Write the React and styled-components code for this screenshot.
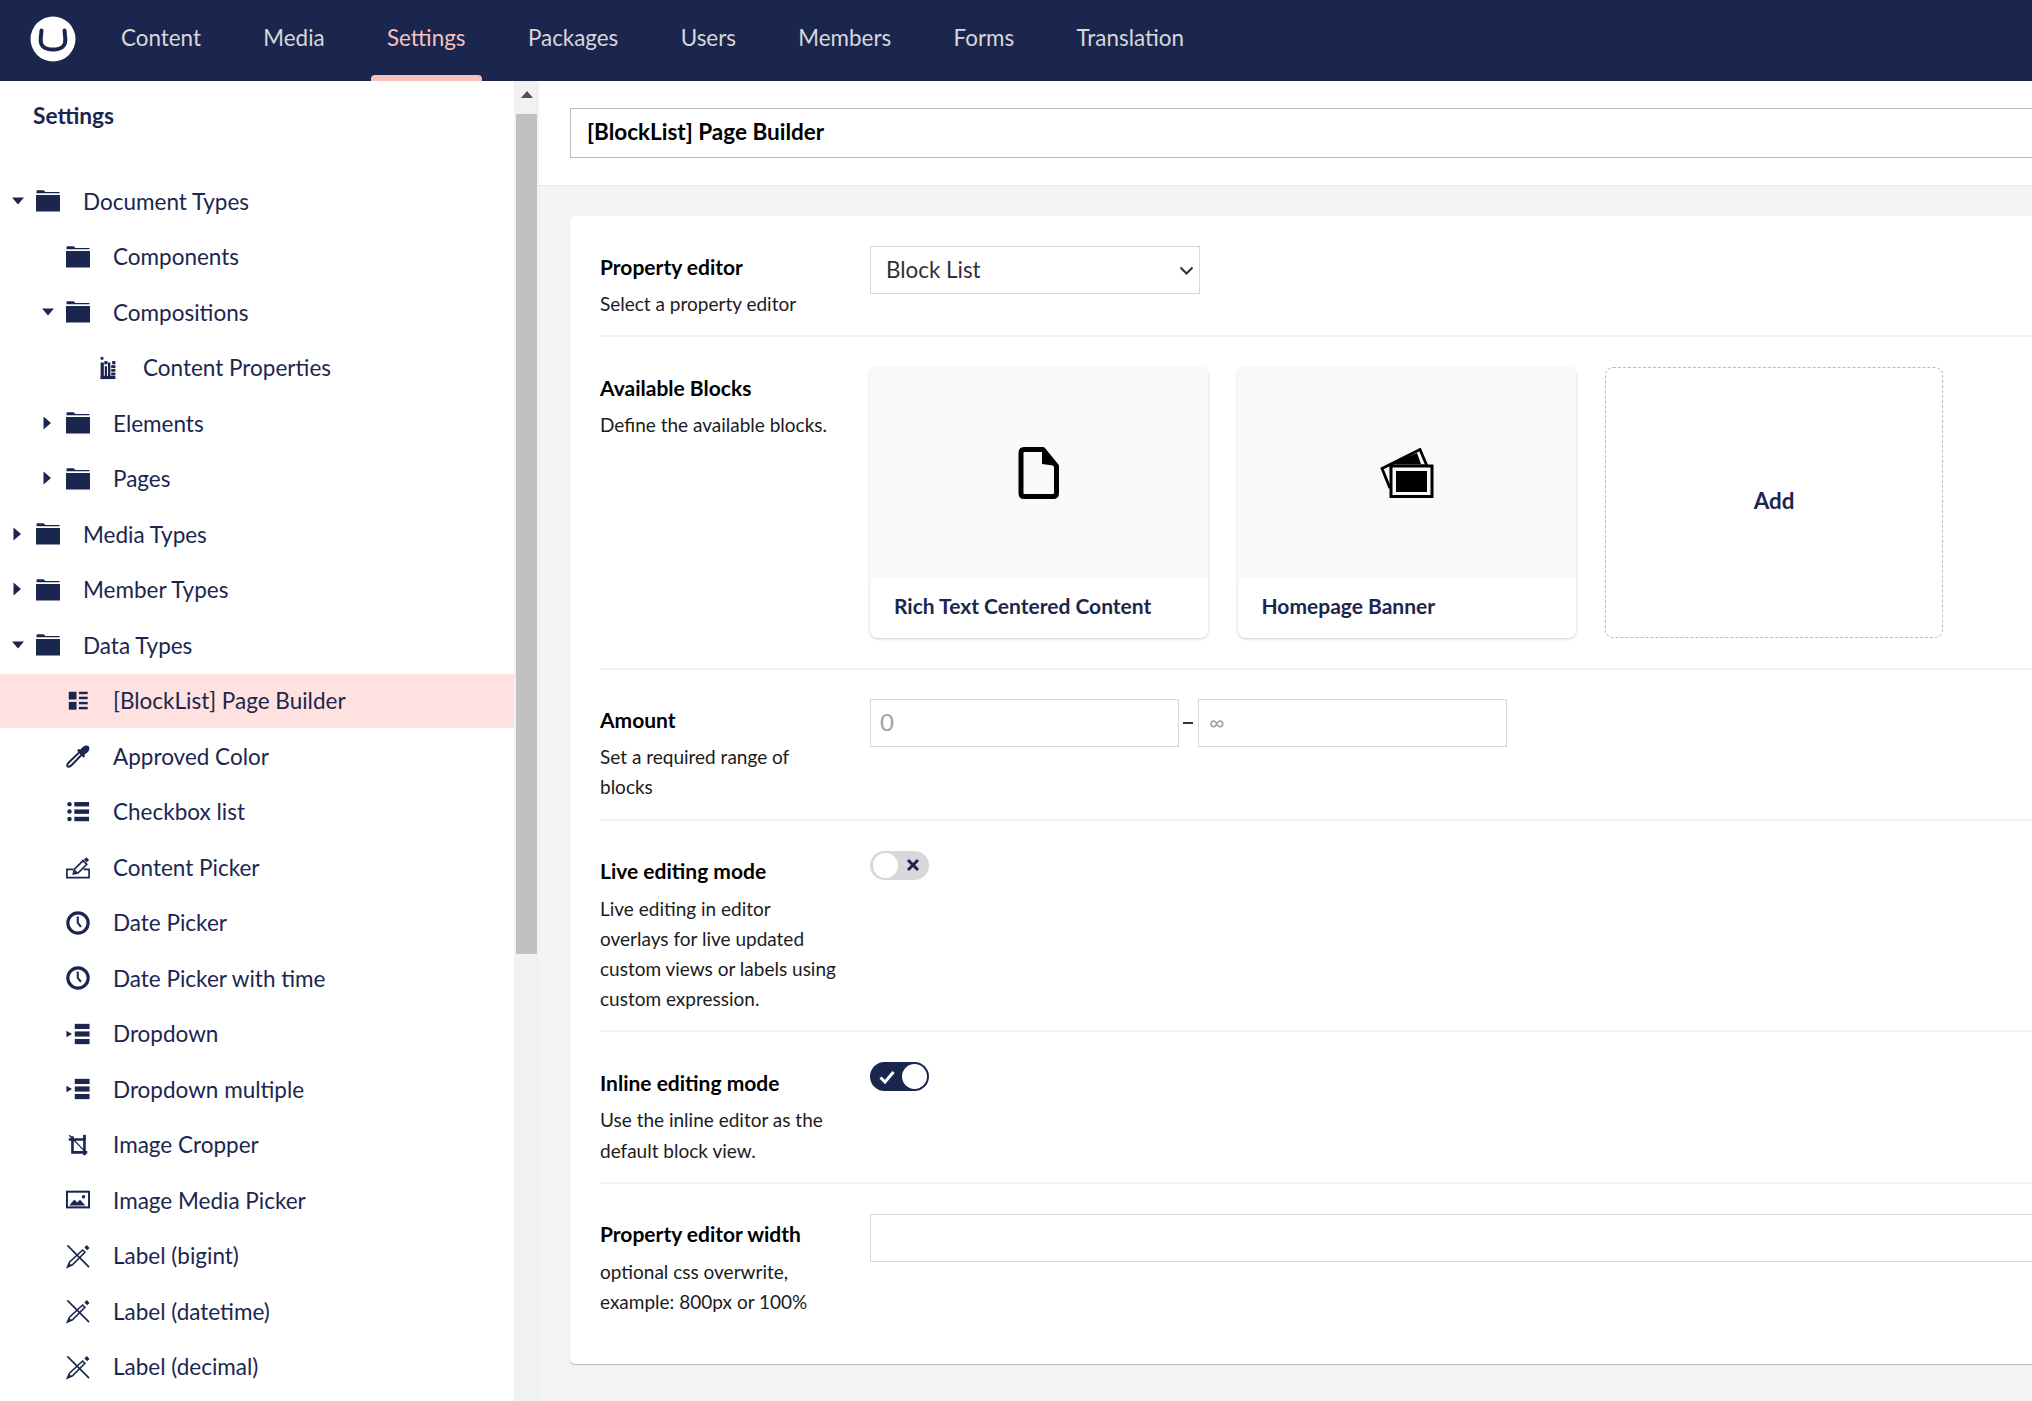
import React from 'react';
import styled, { createGlobalStyle } from 'styled-components';

const NAVY = '#1b264f';

const GlobalStyle = createGlobalStyle`
  html, body {
    margin: 0;
    height: 100%;
    overflow: hidden;
    background: #fff;
  }
  * {
    box-sizing: border-box;
  }
  body {
    font-family: Lato, "Open Sans", sans-serif;
    text-rendering: optimizeLegibility;
    font-feature-settings: "liga" 1;
    color: #000;
  }
`;

const Folder = () => (
  <svg width="24" height="22" viewBox="0 0 24 22" fill={NAVY}>
    <path d="M0.5 2.6V1.2Q0.5 0.2 1.5 0.2H7.5L9.5 2H23.5V3.2H0.5z" />
    <rect x="0" y="5" width="24" height="16.5" />
  </svg>
);

const Glyph = ({ children }) => (
  <svg width="26" height="26" viewBox="0 0 26 26" fill={NAVY}>
    {children}
  </svg>
);

const ICONS = {
  folder: <Folder />,
  properties: (
    <Glyph>
      <rect x="5" y="1" width="3" height="3" />
      <rect x="9" y="5.5" width="3.5" height="3.5" />
      <rect x="17.5" y="5.5" width="3.5" height="3.5" />
      <rect x="5" y="7" width="3.5" height="18" />
      <rect x="5" y="21.5" width="16" height="3.5" />
      <rect x="9.5" y="11" width="2.4" height="11" />
      <rect x="13" y="7" width="2.6" height="15" />
      <rect x="16.5" y="10" width="4.5" height="3" />
      <rect x="16.5" y="14" width="4.5" height="3" />
      <rect x="16.5" y="18" width="4.5" height="3" />
    </Glyph>
  ),
  blocks: (
    <Glyph>
      <rect x="3" y="3" width="8.4" height="8.4" />
      <rect x="3" y="14" width="8.4" height="8.4" />
      <rect x="14" y="3" width="9.5" height="2.6" />
      <rect x="14" y="8.4" width="9.5" height="2.6" />
      <rect x="14" y="14" width="9.5" height="2.6" />
      <rect x="14" y="19.4" width="9.5" height="2.6" />
    </Glyph>
  ),
  dropper: (
    <Glyph>
      <path d="M15 8.5L17.5 11L6.5 22.5C4.5 24.5 2.5 25 1.8 24.2C1 23.4 1.5 21.5 3.5 19.5z" fill="none" stroke={NAVY} strokeWidth="2.2" />
      <path d="M12 7l1.5-1.5 2 0.5 2.5-2.5c2-2 5-2.5 6.5-1s1 4.5-1 6.5L20 11.5l0.5 2L19 15z" />
    </Glyph>
  ),
  list: (
    <Glyph>
      <circle cx="3.8" cy="4.5" r="2.4" />
      <circle cx="3.8" cy="12.5" r="2.4" />
      <circle cx="3.8" cy="20.5" r="2.4" />
      <rect x="9" y="2.2" width="16" height="4.8" />
      <rect x="9" y="10.2" width="16" height="4.8" />
      <rect x="9" y="18.2" width="16" height="4.8" />
    </Glyph>
  ),
  picker: (
    <Glyph>
      <path d="M8 15.5H1V24.5H25V15.5H19" fill="none" stroke={NAVY} strokeWidth="1.8" />
      <path d="M8 20.5l1-5L18.5 6l4 4L13 19.5z" fill="none" stroke={NAVY} strokeWidth="1.8" />
      <path d="M9 20l0.8-4 3.2 3.2z" />
      <path d="M22 2.5l3 3-2.5 2.4-3-3z" />
    </Glyph>
  ),
  clock: (
    <Glyph>
      <circle cx="13" cy="13" r="11" fill="none" stroke={NAVY} strokeWidth="3.4" />
      <path d="M11.6 6h2.2v6.5l3.3 4-1.8 1.4-3.7-4.8z" />
    </Glyph>
  ),
  dropdown: (
    <Glyph>
      <path d="M0.5 9.5l6 3.5-6 3.5z" />
      <rect x="9.5" y="2" width="16" height="5.6" />
      <rect x="9.5" y="10.2" width="16" height="5.6" />
      <rect x="9.5" y="18.4" width="16" height="5.6" />
    </Glyph>
  ),
  crop: (
    <Glyph>
      <path d="M7 3.5V21H23M3 7H20V24" fill="none" stroke={NAVY} strokeWidth="2.8" />
      <path d="M3.5 2.5L21.5 21" fill="none" stroke={NAVY} strokeWidth="1.4" />
      <rect x="18.5" y="2" width="3" height="5" />
    </Glyph>
  ),
  image: (
    <Glyph>
      <rect x="1" y="4" width="24" height="17" fill="none" stroke={NAVY} strokeWidth="2.2" />
      <path d="M3.5 19l5.5-6.5 3.2 3.2 3-3 5.8 6.3z" />
      <circle cx="19" cy="9.4" r="1.9" />
    </Glyph>
  ),
  label: (
    <Glyph>
      <path d="M1.5 1.5L25 25" fill="none" stroke={NAVY} strokeWidth="1.8" />
      <path d="M18 6.5l2.5 2.5L7 22.5 1.5 25l2.5-5.5z" fill="none" stroke={NAVY} strokeWidth="1.7" />
      <path d="M1.5 25l1.8-4.6 2.8 2.8z" />
      <path d="M22.5 1.2l3 3-2.6 2.6-3-3z" />
    </Glyph>
  ),
};

const NAV_ITEMS = ['Content', 'Media', 'Settings', 'Packages', 'Users', 'Members', 'Forms', 'Translation'];

const TREE = [
  { name: 'Document Types', level: 0, icon: 'folder', arrow: 'down' },
  { name: 'Components', level: 1, icon: 'folder' },
  { name: 'Compositions', level: 1, icon: 'folder', arrow: 'down' },
  { name: 'Content Properties', level: 2, icon: 'properties' },
  { name: 'Elements', level: 1, icon: 'folder', arrow: 'right' },
  { name: 'Pages', level: 1, icon: 'folder', arrow: 'right' },
  { name: 'Media Types', level: 0, icon: 'folder', arrow: 'right' },
  { name: 'Member Types', level: 0, icon: 'folder', arrow: 'right' },
  { name: 'Data Types', level: 0, icon: 'folder', arrow: 'down' },
  { name: '[BlockList] Page Builder', level: 1, icon: 'blocks', active: true },
  { name: 'Approved Color', level: 1, icon: 'dropper' },
  { name: 'Checkbox list', level: 1, icon: 'list' },
  { name: 'Content Picker', level: 1, icon: 'picker' },
  { name: 'Date Picker', level: 1, icon: 'clock' },
  { name: 'Date Picker with time', level: 1, icon: 'clock' },
  { name: 'Dropdown', level: 1, icon: 'dropdown' },
  { name: 'Dropdown multiple', level: 1, icon: 'dropdown' },
  { name: 'Image Cropper', level: 1, icon: 'crop' },
  { name: 'Image Media Picker', level: 1, icon: 'image' },
  { name: 'Label (bigint)', level: 1, icon: 'label' },
  { name: 'Label (datetime)', level: 1, icon: 'label' },
  { name: 'Label (decimal)', level: 1, icon: 'label' },
];

const Caret = ({ direction }) => (
  <svg width="12" height="14" viewBox="0 0 12 14" fill={NAVY}>
    {direction === 'down' ? <path d="M0 3.5H12L6 10.5z" /> : <path d="M1.5 0.5L9 7l-7.5 6.5z" />}
  </svg>
);

const LogoMark = () => (
  <svg width="46" height="46" viewBox="0 0 46 46">
    <circle cx="23" cy="23" r="22.5" fill="#fff" />
    <path d="M11.5 14.5l-0.8 8c-0.6 7 3 11 12.3 11s12.9-4 12.3-11l-0.8-8" fill="none" stroke={NAVY} strokeWidth="4" strokeLinecap="round" />
  </svg>
);

const DocumentIcon = () => (
  <svg width="42" height="54" viewBox="0 0 42 54">
    <path d="M6 3.5H25L38.5 20V47Q38.5 50.5 35 50.5H6Q3 50.5 3 47V7Q3 3.5 6 3.5z" fill="none" stroke="#000" strokeWidth="5" strokeLinejoin="round" />
    <path d="M24 3L39 20L24 18z" />
  </svg>
);

const PhotosIcon = () => (
  <svg width="54" height="50" viewBox="0 0 54 50">
    <path d="M2 20.5L40 1.5L47 18H11L12 39H9.5z" fill="none" stroke="#000" strokeWidth="2.8" />
    <path d="M10 16L37 5L41 16z" />
    <rect x="11" y="18" width="41" height="30.5" fill="#f8f8f8" stroke="#000" strokeWidth="3" />
    <rect x="16" y="23" width="31" height="21" />
  </svg>
);

const App = () => {
  return (
    <Page>
      <GlobalStyle />
      <TopBar>
        <Logo>
          <LogoMark />
        </Logo>
        <Sections>
          {NAV_ITEMS.map((item) => (
            <Section key={item} $active={item === 'Settings'}>
              {item}
            </Section>
          ))}
        </Sections>
      </TopBar>
      <Body>
        <Sidebar>
          <TreePane>
            <TreeTitle>Settings</TreeTitle>
            <Tree>
              {TREE.map((node) => (
                <TreeRow key={node.name} $level={node.level} $active={node.active}>
                  <CaretSlot>{node.arrow && <Caret direction={node.arrow} />}</CaretSlot>
                  <IconSlot>{ICONS[node.icon]}</IconSlot>
                  <TreeLabel>{node.name}</TreeLabel>
                </TreeRow>
              ))}
            </Tree>
          </TreePane>
          <ScrollTrack>
            <ScrollArrow />
            <ScrollThumb />
          </ScrollTrack>
        </Sidebar>
        <Main>
          <TitleBar>
            <NameInput defaultValue="[BlockList] Page Builder" />
          </TitleBar>
          <Content>
            <Panel>
              <Field>
                <FieldInfo>
                  <FieldLabel>Property editor</FieldLabel>
                  <FieldHint>Select a property editor</FieldHint>
                </FieldInfo>
                <SelectBox>
                  <EditorSelect defaultValue="Block List">
                    <option>Block List</option>
                  </EditorSelect>
                  <SelectChevron width="15" height="9" viewBox="0 0 15 9">
                    <path d="M1.5 1.5L7.5 7.5L13.5 1.5" fill="none" stroke="#303033" strokeWidth="2" />
                  </SelectChevron>
                </SelectBox>
              </Field>
              <Field $tall>
                <FieldInfo>
                  <FieldLabel>Available Blocks</FieldLabel>
                  <FieldHint>Define the available blocks.</FieldHint>
                </FieldInfo>
                <Blocks>
                  <BlockCard>
                    <BlockPreview>
                      <DocumentIcon />
                    </BlockPreview>
                    <BlockName>Rich Text Centered Content</BlockName>
                  </BlockCard>
                  <BlockCard>
                    <BlockPreview>
                      <PhotosIcon />
                    </BlockPreview>
                    <BlockName>Homepage Banner</BlockName>
                  </BlockCard>
                  <AddCard>Add</AddCard>
                </Blocks>
              </Field>
              <Field>
                <FieldInfo>
                  <FieldLabel>Amount</FieldLabel>
                  <FieldHint>Set a required range of blocks</FieldHint>
                </FieldInfo>
                <Range>
                  <RangeInput placeholder="0" />
                  <RangeDash />
                  <RangeInput placeholder="∞" $small />
                </Range>
              </Field>
              <Field>
                <FieldInfo>
                  <FieldLabel>Live editing mode</FieldLabel>
                  <FieldHint>Live editing in editor overlays for live updated custom views or labels using custom expression.</FieldHint>
                </FieldInfo>
                <Toggle>
                  <ToggleKnob />
                  <svg width="14" height="14" viewBox="0 0 14 14">
                    <path d="M2 2L12 12M12 2L2 12" stroke={NAVY} strokeWidth="3" />
                  </svg>
                </Toggle>
              </Field>
              <Field>
                <FieldInfo>
                  <FieldLabel>Inline editing mode</FieldLabel>
                  <FieldHint>Use the inline editor as the default block view.</FieldHint>
                </FieldInfo>
                <Toggle $on>
                  <ToggleKnob />
                  <svg width="16" height="14" viewBox="0 0 16 14">
                    <path d="M1.5 7.5L6 12L14.5 2" fill="none" stroke="#fff" strokeWidth="3" />
                  </svg>
                </Toggle>
              </Field>
              <Field $last>
                <FieldInfo>
                  <FieldLabel>Property editor width</FieldLabel>
                  <FieldHint>optional css overwrite, example: 800px or 100%</FieldHint>
                </FieldInfo>
                <WidthInput />
              </Field>
            </Panel>
          </Content>
        </Main>
      </Body>
    </Page>
  );
};

export default App;

const Page = styled.div`
  display: flex;
  flex-direction: column;
  height: 1401px;
  width: 2032px;
  overflow: hidden;
`;

const TopBar = styled.header`
  display: flex;
  flex: none;
  height: 81px;
  background: ${NAVY};
`;

const Logo = styled.div`
  display: flex;
  align-items: center;
  padding: 0 0 4px 30px;
  width: 121px;
`;

const Sections = styled.nav`
  display: flex;
  gap: 62.4px;
`;

const Section = styled.a`
  position: relative;
  display: flex;
  align-items: center;
  padding-bottom: 7px;
  font-size: 22.4px;
  color: ${(p) => (p.$active ? '#f5c1bc' : '#d8d7d9')};

  ${(p) =>
    p.$active &&
    `
    &::after {
      content: '';
      position: absolute;
      left: -16px;
      right: -16px;
      bottom: 0;
      height: 6px;
      background: #f5c1bc;
      border-radius: 4px 4px 0 0;
    }
  `}
`;

const Body = styled.div`
  display: flex;
  flex: 1;
  min-height: 0;
`;

const Sidebar = styled.aside`
  display: flex;
  flex: none;
  width: 539px;
`;

const TreePane = styled.div`
  flex: none;
  width: 514px;
  overflow: hidden;
`;

const TreeTitle = styled.div`
  padding: 18px 0 0 33px;
  height: 92.5px;
  font-size: 22.7px;
  font-weight: 700;
  line-height: 34px;
  color: ${NAVY};
`;

const Tree = styled.div`
  display: flex;
  flex-direction: column;
`;

const TreeRow = styled.div`
  display: flex;
  flex: none;
  align-items: center;
  height: ${(p) => (p.$active ? 54 : 55.5)}px;
  margin: ${(p) => (p.$active ? '0.75px 0' : 0)};
  padding-left: ${(p) => 12 + p.$level * 30}px;
  background: ${(p) => (p.$active ? '#ffe1df' : 'transparent')};
`;

const CaretSlot = styled.span`
  display: flex;
  flex: none;
  width: 24px;
  margin-top: -1px;
`;

const IconSlot = styled.span`
  display: flex;
  flex: none;
  align-items: center;
  justify-content: center;
  width: 24px;
  margin-right: 23px;
`;

const TreeLabel = styled.span`
  font-size: 22.5px;
  color: ${NAVY};
  white-space: nowrap;
`;

const ScrollTrack = styled.div`
  display: flex;
  flex: none;
  flex-direction: column;
  align-items: center;
  width: 25px;
  background: #f1f1f1;
`;

const ScrollArrow = styled.div`
  width: 0;
  height: 0;
  margin-top: 10px;
  border-left: 6px solid transparent;
  border-right: 6px solid transparent;
  border-bottom: 7px solid #505050;
`;

const ScrollThumb = styled.div`
  flex: none;
  width: 21px;
  height: 840px;
  margin-top: 16px;
  background: #c1c1c1;
`;

const Main = styled.main`
  flex: none;
  width: 1800px;
  display: flex;
  flex-direction: column;
  background: #f4f2f2;
`;

const TitleBar = styled.div`
  flex: none;
  height: 105px;
  padding: 27px 30px 0 31px;
  background: #fff;
  border-bottom: 1px solid #e9e9eb;
`;

const NameInput = styled.input`
  display: block;
  width: 100%;
  height: 50px;
  padding: 0 16px 3px;
  border: 1.5px solid #bbbabf;
  outline: none;
  font-family: inherit;
  font-size: 22.5px;
  font-weight: 700;
  color: #000;
`;

const Content = styled.div`
  padding: 30px 30px 30px 31px;
`;

const Panel = styled.section`
  padding: 30px 30px 46.5px;
  background: #fff;
  border-radius: 5px;
  box-shadow: 0 1px 1px rgba(0, 0, 0, 0.25);
`;

const Field = styled.div`
  display: flex;
  align-items: flex-start;
  padding-bottom: ${(p) => (p.$last ? 0 : p.$tall ? 30 : 16)}px;
  margin-bottom: ${(p) => (p.$last ? 0 : p.$tall ? 29 : 30)}px;
  border-bottom: ${(p) => (p.$last ? 'none' : '2px solid #f4f2f2')};
`;

const FieldInfo = styled.div`
  flex: none;
  width: 270px;
  padding: 5.5px 30px 0 0;
`;

const FieldLabel = styled.div`
  font-size: 21px;
  font-weight: 700;
  line-height: 30px;
  color: #000;
  margin-bottom: 7.5px;
`;

const FieldHint = styled.div`
  font-size: 19px;
  line-height: 30.2px;
  color: #1b1b1b;
`;

const SelectBox = styled.div`
  position: relative;
  width: 330px;
  height: 48px;
`;

const EditorSelect = styled.select`
  display: block;
  width: 100%;
  height: 100%;
  padding: 0 15px 2px;
  border: 1.5px solid #d8d7d9;
  border-radius: 0;
  appearance: none;
  background: #fff;
  font-family: inherit;
  font-size: 22.4px;
  color: #303033;
  outline: none;
`;

const SelectChevron = styled.svg`
  position: absolute;
  top: 20px;
  right: 6px;
`;

const Blocks = styled.div`
  display: flex;
  gap: 29.5px;
`;

const BlockCard = styled.div`
  display: flex;
  flex-direction: column;
  width: 338px;
  height: 271px;
  background: #fff;
  border-radius: 8px;
  overflow: hidden;
  box-shadow: 0 1px 3px rgba(0, 0, 0, 0.2);
`;

const BlockPreview = styled.div`
  display: flex;
  flex: none;
  align-items: center;
  justify-content: center;
  height: 211px;
  background: #f9f9f9;
`;

const BlockName = styled.div`
  padding: 0 0 0 24px;
  font-size: 21px;
  font-weight: 700;
  line-height: 56px;
  color: ${NAVY};
`;

const AddCard = styled.div`
  display: flex;
  align-items: center;
  justify-content: center;
  width: 338px;
  height: 271px;
  padding-bottom: 4px;
  border: 1.5px dashed #bbbabf;
  border-radius: 8px;
  font-size: 22.4px;
  font-weight: 700;
  color: ${NAVY};
`;

const Range = styled.div`
  display: flex;
  align-items: center;
`;

const RangeInput = styled.input`
  width: 309px;
  height: 48px;
  padding: 0 ${(p) => (p.$small ? 10 : 9)}px 3px;
  border: 1.5px solid #d8d7d9;
  outline: none;
  font-family: inherit;
  font-size: ${(p) => (p.$small ? 21 : 24)}px;

  &::placeholder {
    color: #a2a1a6;
    opacity: 1;
  }
`;

const RangeDash = styled.span`
  flex: none;
  width: 10px;
  height: 2px;
  margin: 0 5px 0 4px;
  background: #333;
`;

const Toggle = styled.div`
  display: flex;
  flex-direction: ${(p) => (p.$on ? 'row-reverse' : 'row')};
  align-items: center;
  justify-content: space-between;
  width: 59px;
  height: 29px;
  padding: ${(p) => (p.$on ? '0 2px 0 9px' : '0 9px 0 3px')};
  border-radius: 15px;
  background: ${(p) => (p.$on ? NAVY : '#d8d7d9')};
`;

const ToggleKnob = styled.span`
  flex: none;
  width: 25px;
  height: 25px;
  border-radius: 50%;
  background: #fff;
`;

const WidthInput = styled.input`
  flex: 1;
  height: 48px;
  border: 1.5px solid #d8d7d9;
  outline: none;
`;
